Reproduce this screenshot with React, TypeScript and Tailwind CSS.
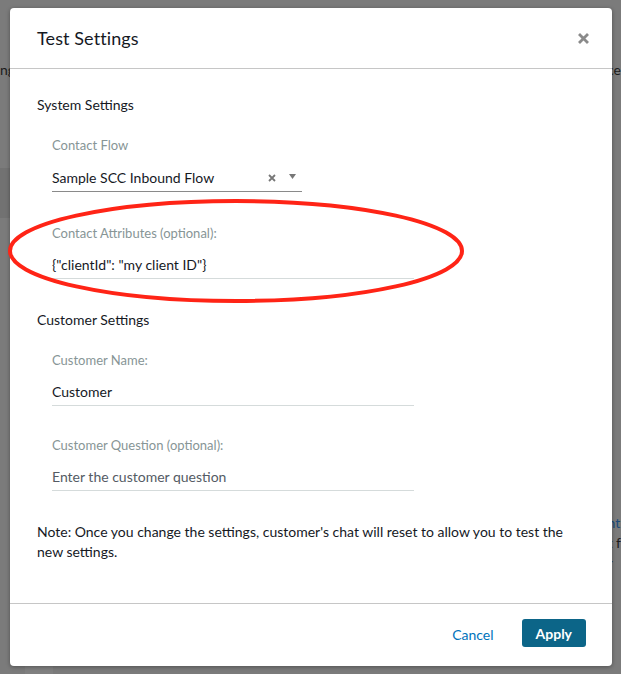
import React from 'react';

function Field({ label, value, placeholder, width }: { label: string; value?: string; placeholder?: string; width: string }) {
  return (
    <div className="pl-[15px]">
      <div className="text-[13px] text-[#879596] leading-[16px]">{label}</div>
      <div className={`mt-[15px] ${width} border-b border-[#d5dbdb] pb-[4px] text-[14px] leading-[18px] ${value ? 'text-[#16191f]' : 'text-[#545b64]'}`}>
        {value ?? placeholder}
      </div>
    </div>
  );
}

export default function App() {
  return (
    <div className="relative w-[621px] h-[674px] overflow-hidden bg-[#7b7b7b] font-['Lato','Liberation_Sans',sans-serif]">
      {/* page behind the overlay */}
      <div className="absolute left-0 top-[59px] text-[14px] text-[#1b1b1b]">ng</div>
      <div className="absolute right-0 top-[59px] text-[14px] text-[#1b1b1b]">ce</div>
      <div className="absolute left-0 top-[168px] w-[12px] h-[50px] bg-[#727272]" />
      <div className="absolute right-0 top-[513px] text-[14px] leading-[20px] text-[#1b1b1b]">
        <div className="text-[#1a4a7a]">nt</div>
        <div>t f</div>
        <div>r</div>
      </div>
      <div className="absolute left-[25px] bottom-0 w-[28px] h-[9px] bg-[#808080]" />

      {/* modal */}
      <div className="absolute left-[10px] top-[8px] w-[602px] h-[658px] bg-white rounded-[4px] shadow-[0_1px_4px_rgba(0,0,0,0.35)] flex flex-col">
        <div className="h-[61px] shrink-0 flex items-center justify-between pl-[27px] pr-[23px] border-b border-[#c6c6c6]">
          <span className="text-[18px] text-[#16191f] tracking-[0.1px]">Test Settings</span>
          <svg width="11" height="11" viewBox="0 0 11 11">
            <path d="M2 2 L9 9 M9 2 L2 9" stroke="#8a8a8a" strokeWidth="2.8" strokeLinecap="square" />
          </svg>
        </div>

        <div className="flex-1 pl-[27px] pr-[26px] pt-[27px]">
          <div className="text-[14px] leading-[18px] text-[#16191f]">System Settings</div>

          <div className="mt-[23px] pl-[15px]">
            <div className="text-[13px] text-[#879596] leading-[16px]">Contact Flow</div>
            <div className="mt-[16px] w-[250px] border-b border-[#8a8a8a] pb-[4px] flex items-center text-[14px] leading-[18px] text-[#16191f]">
              <span className="flex-1">Sample SCC Inbound Flow</span>
              <svg width="8" height="8" viewBox="0 0 8 8" className="mr-[13px]">
                <path d="M1 1 L7 7 M7 1 L1 7" stroke="#777" strokeWidth="1.8" />
              </svg>
              <svg width="7" height="5" viewBox="0 0 7 5" className="mr-[6px] mb-[3px]">
                <path d="M0 0 L7 0 L3.5 5 Z" fill="#777" />
              </svg>
            </div>
          </div>

          <div className="mt-[33px]">
            <Field label="Contact Attributes (optional):" value={'{"clientId": "my client ID"}'} width="w-[362px]" />
          </div>

          <div className="mt-[32px] text-[14px] leading-[18px] text-[#16191f]">Customer Settings</div>
          <div className="mt-[23px]">
            <Field label="Customer Name:" value="Customer" width="w-[362px]" />
          </div>
          <div className="mt-[31px]">
            <Field label="Customer Question (optional):" placeholder="Enter the customer question" width="w-[362px]" />
          </div>

          <p className="mt-[31px] text-[14px] leading-[20px] text-[#16191f]">
            Note: Once you change the settings, customer's chat will reset to allow you to test the new settings.
          </p>
        </div>

        <div className="h-[63px] shrink-0 border-t border-[#c6c6c6] flex items-start justify-end gap-[28px] pr-[26px] pt-[15px]">
          <span className="mt-[5px] text-[14px] text-[#0073bb]">Cancel</span>
          <button className="h-[28px] px-[14px] rounded-[3px] bg-[#0c6588] text-white text-[14px] font-bold">Apply</button>
        </div>
      </div>

      {/* red annotation */}
      <svg className="absolute left-0 top-0 pointer-events-none" width="621" height="674">
        <ellipse cx="236" cy="251" rx="226" ry="50" fill="none" stroke="#ff2416" strokeWidth="4" />
      </svg>
    </div>
  );
}
